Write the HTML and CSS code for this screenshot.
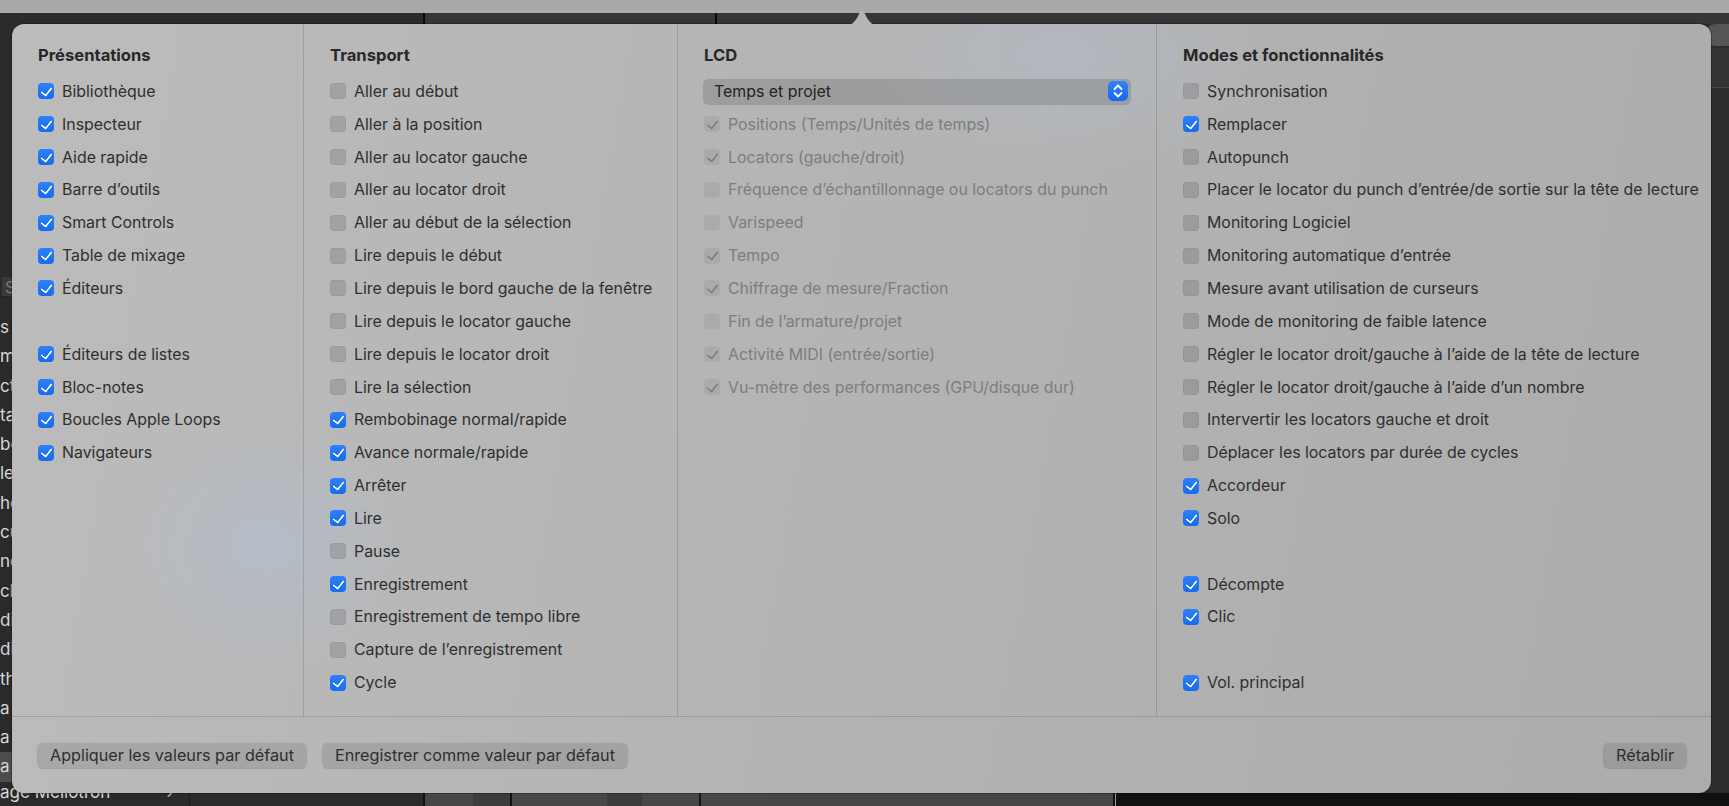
FILE: index.html
```html
<!DOCTYPE html>
<html lang="fr">
<head>
<meta charset="utf-8">
<title>Personnaliser la barre de commande</title>
<link rel="stylesheet" href="styles.css">
</head>
<body>
<div class="app">
  <div class="topstrip"></div>
  <div class="toolbar">
    <span class="tick tick-a"></span>
    <span class="toolbar-right"><span class="tick"></span></span>
  </div>
  <div class="main">
    <aside class="sidebar">
      <div class="search">S</div>
      <ul class="patches">
        <li>s</li><li>m</li><li>ct</li><li>ta</li><li>be</li><li>le</li><li>he</li><li>cu</li><li>no</li><li>ck</li><li>di</li><li>di</li><li>th</li><li>a</li><li>a</li><li class="sel">a</li><li class="last">age Mellotron <span class="chev">›</span></li>
      </ul>
    </aside>
    <section class="workspace">
      <div class="ws-top"><div class="knob"></div></div>
      <div class="ws-line"></div>
      <div class="ws-body"></div>
      <div class="mixer">
        <span class="mx d"></span><span class="mx g w48"></span><span class="mx m w37"></span><span class="mx d w15"></span><span class="mx g w45"></span><span class="mx g w50"></span><span class="mx m w35"></span><span class="mx g w57"></span><span class="mx k"></span><span class="mx g grow"></span><span class="mx d w12"></span><span class="mx l"></span><span class="mx d grow2"></span>
      </div>
    </section>
  </div>
</div>

<div class="popover">
  <svg class="arrow" width="40" height="17" viewBox="0 0 40 17"><path d="M0 17 C8 17 11 15 15 9 L18 3 Q20 0 22 3 L25 9 C29 15 32 17 40 17 Z" fill="#b4b4b4"/></svg>
  <div class="columns">
    <div class="col col1">
      <h2>Présentations</h2>
      <div class="row"><span class="cb on"></span>Bibliothèque</div>
      <div class="row"><span class="cb on"></span>Inspecteur</div>
      <div class="row"><span class="cb on"></span>Aide rapide</div>
      <div class="row"><span class="cb on"></span>Barre d’outils</div>
      <div class="row"><span class="cb on"></span>Smart Controls</div>
      <div class="row"><span class="cb on"></span>Table de mixage</div>
      <div class="row"><span class="cb on"></span>Éditeurs</div>
      <div class="row"></div>
      <div class="row"><span class="cb on"></span>Éditeurs de listes</div>
      <div class="row"><span class="cb on"></span>Bloc-notes</div>
      <div class="row"><span class="cb on"></span>Boucles Apple Loops</div>
      <div class="row"><span class="cb on"></span>Navigateurs</div>
    </div>
    <div class="col col2">
      <h2>Transport</h2>
      <div class="row"><span class="cb"></span>Aller au début</div>
      <div class="row"><span class="cb"></span>Aller à la position</div>
      <div class="row"><span class="cb"></span>Aller au locator gauche</div>
      <div class="row"><span class="cb"></span>Aller au locator droit</div>
      <div class="row"><span class="cb"></span>Aller au début de la sélection</div>
      <div class="row"><span class="cb"></span>Lire depuis le début</div>
      <div class="row"><span class="cb"></span>Lire depuis le bord gauche de la fenêtre</div>
      <div class="row"><span class="cb"></span>Lire depuis le locator gauche</div>
      <div class="row"><span class="cb"></span>Lire depuis le locator droit</div>
      <div class="row"><span class="cb"></span>Lire la sélection</div>
      <div class="row"><span class="cb on"></span>Rembobinage normal/rapide</div>
      <div class="row"><span class="cb on"></span>Avance normale/rapide</div>
      <div class="row"><span class="cb on"></span>Arrêter</div>
      <div class="row"><span class="cb on"></span>Lire</div>
      <div class="row"><span class="cb"></span>Pause</div>
      <div class="row"><span class="cb on"></span>Enregistrement</div>
      <div class="row"><span class="cb"></span>Enregistrement de tempo libre</div>
      <div class="row"><span class="cb"></span>Capture de l’enregistrement</div>
      <div class="row"><span class="cb on"></span>Cycle</div>
    </div>
    <div class="col col3">
      <h2>LCD</h2>
      <div class="row">
        <div class="popup"><span>Temps et projet</span>
          <span class="stepper"><svg width="12" height="16" viewBox="0 0 12 16"><path d="M2.5 6 L6 2.5 L9.5 6 M2.5 10 L6 13.5 L9.5 10" fill="none" stroke="#fff" stroke-width="1.8" stroke-linecap="round" stroke-linejoin="round"/></svg></span>
        </div>
      </div>
      <div class="row dis"><span class="cb on"></span>Positions (Temps/Unités de temps)</div>
      <div class="row dis"><span class="cb on"></span>Locators (gauche/droit)</div>
      <div class="row dis"><span class="cb"></span>Fréquence d’échantillonnage ou locators du punch</div>
      <div class="row dis"><span class="cb"></span>Varispeed</div>
      <div class="row dis"><span class="cb on"></span>Tempo</div>
      <div class="row dis"><span class="cb on"></span>Chiffrage de mesure/Fraction</div>
      <div class="row dis"><span class="cb"></span>Fin de l’armature/projet</div>
      <div class="row dis"><span class="cb on"></span>Activité MIDI (entrée/sortie)</div>
      <div class="row dis"><span class="cb on"></span>Vu-mètre des performances (GPU/disque dur)</div>
    </div>
    <div class="col col4">
      <h2>Modes et fonctionnalités</h2>
      <div class="row"><span class="cb"></span>Synchronisation</div>
      <div class="row"><span class="cb on"></span>Remplacer</div>
      <div class="row"><span class="cb"></span>Autopunch</div>
      <div class="row"><span class="cb"></span>Placer le locator du punch d’entrée/de sortie sur la tête de lecture</div>
      <div class="row"><span class="cb"></span>Monitoring Logiciel</div>
      <div class="row"><span class="cb"></span>Monitoring automatique d’entrée</div>
      <div class="row"><span class="cb"></span>Mesure avant utilisation de curseurs</div>
      <div class="row"><span class="cb"></span>Mode de monitoring de faible latence</div>
      <div class="row"><span class="cb"></span>Régler le locator droit/gauche à l’aide de la tête de lecture</div>
      <div class="row"><span class="cb"></span>Régler le locator droit/gauche à l’aide d’un nombre</div>
      <div class="row"><span class="cb"></span>Intervertir les locators gauche et droit</div>
      <div class="row"><span class="cb"></span>Déplacer les locators par durée de cycles</div>
      <div class="row"><span class="cb on"></span>Accordeur</div>
      <div class="row"><span class="cb on"></span>Solo</div>
      <div class="row"></div>
      <div class="row"><span class="cb on"></span>Décompte</div>
      <div class="row"><span class="cb on"></span>Clic</div>
      <div class="row"></div>
      <div class="row"><span class="cb on"></span>Vol. principal</div>
    </div>
  </div>
  <div class="footer">
    <button class="btn">Appliquer les valeurs par défaut</button>
    <button class="btn">Enregistrer comme valeur par défaut</button>
    <span class="spacer"></span>
    <button class="btn">Rétablir</button>
  </div>
</div>
</body>
</html>
```

FILE: styles.css
```css
* { box-sizing: border-box; }
html, body { margin: 0; padding: 0; }
body {
  width: 1729px;
  height: 806px;
  overflow: hidden;
  background: #2c2c2c;
  font-family: Inter, "Noto Sans", "Liberation Sans", sans-serif;
  position: relative;
}

/* ---------- background app ---------- */
.app { display: flex; flex-direction: column; height: 806px; }
.topstrip { height: 13px; background: #a9a9a9; }
.toolbar { height: 11px; background: #2b2b2b; display: flex; }
.tick { display: block; width: 2px; height: 11px; background: #080808; }
.tick-a { margin-left: 423px; }
.toolbar-right { flex: 1; background: #363636; display: flex; padding-left: 290px; }
.main { flex: 1; display: flex; min-height: 0; }
.sidebar { width: 190px; background: #2a2a2a; border-right: 1px solid #1c1c1c; display: flex; flex-direction: column; padding-top: 253px; }
.search { height: 20px; margin: 0 0 0 2px; background: #3a3a3a; color: #7a7a7a; font-size: 16px; line-height: 20px; padding-left: 3px; border-bottom: 1px solid #222; }
.patches { list-style: none; margin: 16px 0 0; padding: 0; }
.patches li { height: 29.3px; line-height: 29.3px; color: #d6d6d6; font-size: 17px; padding-left: 0; white-space: nowrap; display: flex; }
.patches li.sel { background: #4c4c4c; }
.patches li.last { margin-top: -4px; }
.chev { margin-left: auto; margin-right: 16px; color: #bbb; }
.workspace { flex: 1; display: flex; flex-direction: column; }
.ws-top { height: 24px; background: #2d2d2d; display: flex; justify-content: flex-end; }
.knob { width: 24px; height: 22px; background: #555; border-radius: 11px 0 0 11px; }
.ws-line { height: 40px; border-bottom: 1px solid #474747; background: #333; }
.ws-body { flex: 1; background: #2d2d2d; }
.mixer { height: 13px; display: flex; background: #2b2b2b; padding-left: 233px; }
.mx { display: block; height: 13px; }
.mx.d { width: 2px; background: #111; }
.mx.g { background: #474747; }
.mx.m { background: #3c3c3c; }
.mx.k { width: 2px; background: #151515; }
.mx.l { width: 1px; background: #999; }
.w48 { width: 48px; } .w37 { width: 37px; } .w15 { width: 15px; } .w45 { width: 45px; }
.w50 { width: 50px; } .w35 { width: 35px; } .w57 { width: 57px; } .w12 { width: 12px; }
.grow { width: 412px; }
.grow2 { flex: 1; background: #2c2c2c; }

/* ---------- popover ---------- */
.popover {
  position: absolute;
  left: 12px;
  top: 24px;
  width: 1699px;
  height: 769px;
  border-radius: 12px;
  background:
    radial-gradient(ellipse 150px 130px at 15% 68%, rgba(175, 192, 215, 0.45), rgba(175, 192, 215, 0) 100%),
    radial-gradient(ellipse 220px 120px at 62% 4%, rgba(180, 195, 215, 0.35), rgba(180, 195, 215, 0) 100%),
    linear-gradient(100deg, #bcbcbc 0%, #b6b6b6 35%, #b2b2b2 60%, #acacac 100%);
  box-shadow: 0 0 0 1px rgba(0, 0, 0, 0.25);
  display: flex;
  flex-direction: column;
  color: #2f2f2f;
  font-size: 15.9px;
}
.arrow { position: absolute; left: 830px; top: -15px; }

.columns { display: flex; height: 693px; border-bottom: 1px solid rgba(0, 0, 0, 0.14); }
.col { padding: 21px 0 0 26px; }
.col + .col { border-left: 1px solid rgba(0, 0, 0, 0.14); }
.col1 { width: 291px; }
.col2 { width: 374px; }
.col3 { width: 479px; }
.col4 { flex: 1; }

h2 {
  margin: 0 0 10px;
  height: 20px;
  line-height: 20px;
  font-size: 16.6px;
  font-weight: 700;
  color: #272727;
}
.row {
  height: 32.85px;
  display: flex;
  align-items: center;
  white-space: nowrap;
}
.cb {
  width: 16px;
  height: 16px;
  border-radius: 4px;
  margin-right: 8px;
  flex: none;
  background: rgba(0, 0, 0, 0.12);
  box-shadow: inset 0 0 0 0.5px rgba(0, 0, 0, 0.08);
  display: flex;
  align-items: center;
  justify-content: center;
}
.cb.on { background: linear-gradient(#2d80f8, #166cf0); box-shadow: none; }
.cb.on::after {
  content: "";
  width: 5px;
  height: 9px;
  border: solid #fff;
  border-width: 0 2.6px 2.6px 0;
  transform: translate(0, -1px) rotate(38deg);
  border-radius: 1px;
}
.dis { color: #7d7d7d; }
.dis .cb { background: rgba(0, 0, 0, 0.06); box-shadow: none; }
.dis .cb.on { background: rgba(0, 0, 0, 0.06); }
.dis .cb.on::after { border-color: #7d7d7d; }

.popup {
  width: 428px;
  height: 25px;
  margin-left: -1px;
  border-radius: 6px;
  background: rgba(0, 0, 0, 0.13);
  box-shadow: 0 0.5px 1px rgba(0, 0, 0, 0.15);
  display: flex;
  align-items: center;
  padding: 0 3px 0 11px;
  color: #232323;
}
.popup span:first-child { flex: 1; }
.stepper {
  width: 20px;
  height: 20px;
  border-radius: 5px;
  background: linear-gradient(#2f82f8, #1568ef);
  display: flex;
  align-items: center;
  justify-content: center;
}

.footer { flex: 1; display: flex; align-items: center; padding: 0 24px 0 25px; gap: 15px; }
.spacer { flex: 1; }
.btn {
  height: 25px;
  border: 0;
  border-radius: 6px;
  padding: 0 13px;
  background: rgba(0, 0, 0, 0.1);
  box-shadow: 0 0.5px 1px rgba(0, 0, 0, 0.15);
  font-family: inherit;
  font-size: 16.2px;
  color: #2e2e2e;
}
```
